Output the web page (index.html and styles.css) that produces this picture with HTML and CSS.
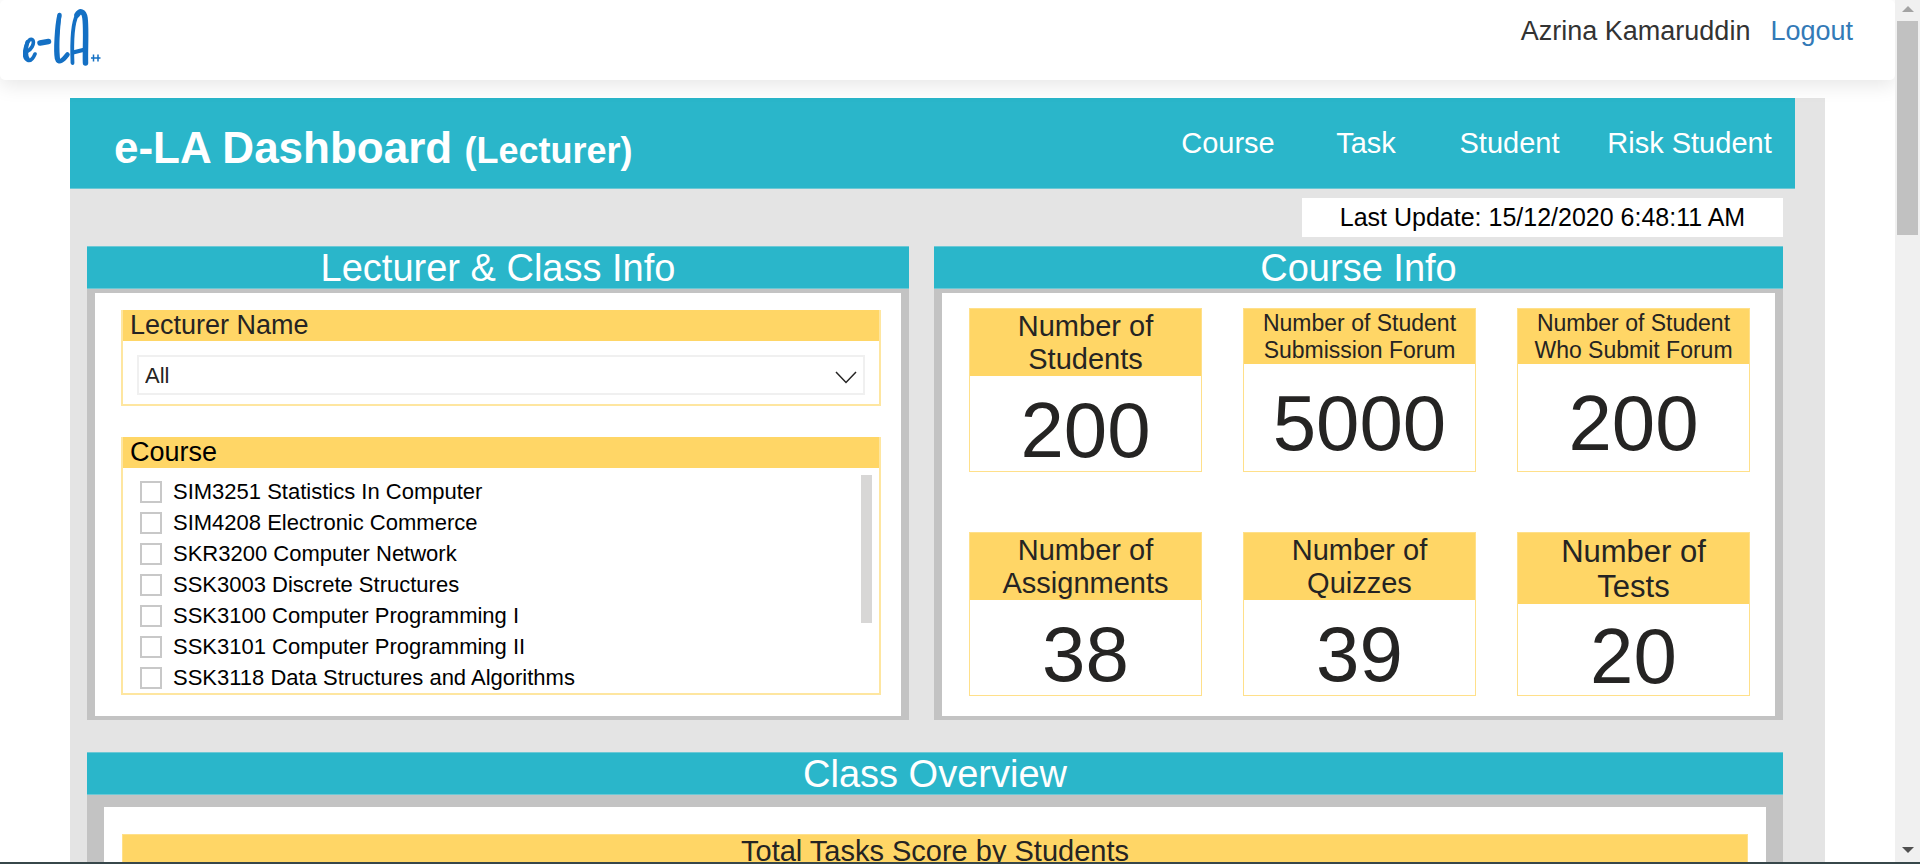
FILE: index.html
```html
<!DOCTYPE html>
<html lang="en">
<head>
<meta charset="utf-8">
<title>e-LA Dashboard</title>
<link rel="stylesheet" href="styles.css">
</head>
<body>
<div class="window">
  <div class="page">
    <header class="topbar">
      <a class="logo" href="#" aria-label="e-LA home">
        <svg width="68" height="60" viewBox="0 0 68 60" fill="none" stroke="#1470c4" stroke-linecap="round" stroke-linejoin="round">
          <path stroke-width="3.6" d="M4 43.500C8 42 11.500 36 10 32.500C8 29 4.500 33 3 38C0.500 46 1.500 51 5.500 52.500C8.500 53 10.500 49.500 12 46"/>
          <path stroke-width="4" d="M4.500 34C2.500 40 2.500 48 5 51.500"/>
          <path stroke-width="5.500" d="M17 35L25.500 33.500"/>
          <path stroke-width="4.500" d="M36.500 7C34 18 32.500 43 34 50.500C35.500 57 41 51 44.500 46.500"/>
          <path stroke-width="3.600" d="M36.500 8C35 22 34 42 35.500 53"/>
          <path stroke-width="3.800" d="M49.500 55C49 42 49 16 54 7"/>
          <path stroke-width="5.500" d="M54 7C57 2 61 3 62 10C63.500 22 62 42 62.500 55"/>
          <path stroke-width="4" d="M50 44.500L62 41.500"/>
        </svg>
        <svg class="plus" width="11" height="10" viewBox="0 0 11 10" stroke="#1470c4" stroke-width="1.500"><path d="M0 5H9.500M2.500 1.500V8.500M7 1.500V8.500"/></svg>
      </a>
      <div class="user"><span>Azrina Kamaruddin</span><a href="#">Logout</a></div>
    </header>

    <main class="report">
      <div class="banner">
        <h1>e-LA Dashboard <small>(Lecturer)</small></h1>
        <nav class="tabs"><a href="#">Course</a><a href="#">Task</a><a href="#">Student</a><a href="#">Risk Student</a></nav>
      </div>

      <div class="content">
        <p class="updated">Last Update: 15/12/2020 6:48:11 AM</p>

        <div class="panels">
          <section class="panel">
            <h2>Lecturer &amp; Class Info</h2>
            <div class="panel-body filters">
              <div class="filter">
                <label class="filter-title soft" for="lecturer">Lecturer Name</label>
                <div class="select-wrap">
                  <select id="lecturer"><option>All</option></select>
                  <svg class="chevron" width="22" height="13" viewBox="0 0 22 13" fill="none" stroke="#252423" stroke-width="1.500"><path d="M1 1L11 11.500L21 1"/></svg>
                </div>
              </div>
              <div class="filter course">
                <h3 class="filter-title">Course</h3>
                <div class="list-wrap">
                  <ul class="list">
                    <li><label><input type="checkbox">SIM3251 Statistics In Computer</label></li>
                    <li><label><input type="checkbox">SIM4208 Electronic Commerce</label></li>
                    <li><label><input type="checkbox">SKR3200 Computer Network</label></li>
                    <li><label><input type="checkbox">SSK3003 Discrete Structures</label></li>
                    <li><label><input type="checkbox">SSK3100 Computer Programming I</label></li>
                    <li><label><input type="checkbox">SSK3101 Computer Programming II</label></li>
                    <li><label><input type="checkbox">SSK3118 Data Structures and Algorithms</label></li>
                  </ul>
                  <div class="list-thumb"></div>
                </div>
              </div>
            </div>
          </section>

          <section class="panel">
            <h2>Course Info</h2>
            <div class="panel-body cards">
              <article class="card"><h3>Number of<br>Students</h3><p>200</p></article>
              <article class="card compact"><h3>Number of Student<br>Submission Forum</h3><p>5000</p></article>
              <article class="card compact"><h3>Number of Student<br>Who Submit Forum</h3><p>200</p></article>
              <article class="card"><h3>Number of<br>Assignments</h3><p>38</p></article>
              <article class="card"><h3>Number of<br>Quizzes</h3><p>39</p></article>
              <article class="card large"><h3>Number of<br>Tests</h3><p>20</p></article>
            </div>
          </section>
        </div>

        <section class="panel overview">
          <h2>Class Overview</h2>
          <div class="panel-body">
            <div class="chart"><h3>Total Tasks Score by Students</h3></div>
          </div>
        </section>
      </div>
    </main>
  </div>
  <div class="scrollbar" aria-hidden="true">
    <svg width="12" height="6" viewBox="0 0 12 6"><path fill="#a3a3a3" d="M6 0L12 6H0Z"/></svg>
    <div class="thumb"></div>
    <svg width="12" height="6" viewBox="0 0 12 6"><path fill="#505050" d="M6 6L12 0H0Z"/></svg>
  </div>
</div>
<div class="edge"></div>
</body>
</html>
```
FILE: styles.css
```css
* { box-sizing: border-box; }
body, h1, h2, h3, p, ul { margin: 0; padding: 0; }
h2, h3 { font-weight: 400; }
a { text-decoration: none; }

body {
  display: flex;
  flex-direction: column;
  height: 100vh;
  overflow: hidden;
  background: #fff;
  color: #252423;
  font-family: "Liberation Sans", Arial, sans-serif;
}

.window { display: flex; flex: 1; min-height: 0; }
.page { flex: 1; min-width: 0; overflow: hidden; }
.edge { height: 2px; background: #37474a; }

.scrollbar {
  display: flex;
  flex-direction: column;
  align-items: center;
  flex: none;
  width: 25px;
  padding: 6px 2px 9px;
  background: #f0f0f0;
}
.scrollbar svg { flex: none; }
.thumb { width: 100%; height: 214px; margin: 9px 0 auto; background: #c1c1c1; }

.topbar {
  position: relative;
  display: flex;
  justify-content: space-between;
  height: 80px;
  padding: 8px 42px 0 23px;
  border-radius: 5px;
  background: #fff;
  box-shadow: 0 5px 20px rgba(0, 0, 0, 0.1);
}
.logo { display: flex; align-items: flex-end; height: 60px; }
.plus { margin-bottom: 5px; }
.user { display: flex; gap: 20px; color: #333; font-size: 27px; line-height: 46px; }
.user a { color: #337ab7; }

.report { margin: 18px 70px 0; padding-right: 30px; background: #e4e4e4; }

.banner {
  display: flex;
  justify-content: space-between;
  height: 91px;
  padding-left: 44px;
  border-bottom: 1px solid #6cc8d5;
  background: #2ab6ca;
  color: #fff;
}
.banner h1 { font-size: 44px; line-height: 100px; white-space: nowrap; }
.banner small { font-size: 36px; }
.tabs { display: grid; grid-template-columns: 138px 138px 149px 211px; text-align: center; }
.tabs a { color: #fff; font-size: 29px; line-height: 90px; }

.content { padding: 9px 12px 0 17px; }
.updated {
  width: 481px;
  margin-left: auto;
  background: #fff;
  color: #000;
  font-size: 25px;
  line-height: 39px;
  text-align: center;
}

.panels { display: grid; grid-template-columns: 822fr 849fr; gap: 25px; margin-top: 9px; }
.panel { display: flex; flex-direction: column; background: #c3c3c3; }
.panel h2 {
  padding-top: 2px;
  border: 1px solid #6cc8d5;
  border-width: 1px 0;
  background: #2ab6ca;
  color: #fff;
  font-size: 38px;
  line-height: 39px;
  text-align: center;
}
.panel-body { flex: 1; margin: 4px 8px; background: #fff; }

.filters { padding: 17px 20px 21px 26px; }
.filter { border: 2px solid #fee6a0; border-top: 0; }
.filter-title {
  display: block;
  padding-left: 7px;
  background: #ffd666;
  color: #000;
  font-size: 27px;
  line-height: 31px;
}
.filter-title.soft { color: #252423; }
.select-wrap { position: relative; padding: 14px 14px 9px; }
.select-wrap select {
  display: block;
  width: 100%;
  height: 40px;
  padding: 0 6px;
  appearance: none;
  border: 2px solid #f0f0f0;
  border-radius: 0;
  background: #fff;
  color: #252423;
  font: 22px "Liberation Sans", Arial, sans-serif;
}
.chevron { position: absolute; top: 30px; right: 22px; pointer-events: none; }
.course { margin-top: 31px; }
.list-wrap { display: flex; justify-content: space-between; padding: 7px 7px 0 17px; }
.list { padding-top: 1px; list-style: none; }
.list label {
  display: flex;
  align-items: center;
  gap: 11px;
  color: #000;
  font-size: 22px;
  line-height: 31px;
}
.list input {
  width: 22px;
  height: 22px;
  margin: 0;
  appearance: none;
  border: 2px solid #c8c8c8;
  background: #fff;
}
.list-thumb { width: 11px; height: 148px; background: #d8d7d6; }

.cards {
  display: grid;
  grid-template-columns: repeat(3, 1fr);
  grid-auto-rows: 1fr;
  gap: 60px 41px;
  padding: 15px 25px 20px 27px;
}
.card {
  display: flex;
  flex-direction: column;
  border: 1px solid #ffe08a;
  text-align: center;
}
.card h3, .chart h3 { background: #ffd666; font-size: 29px; line-height: 33px; }
.card h3 { padding-top: 1px; }
.card p { padding-top: 16px; font-size: 78px; line-height: 76px; }
.card.compact h3 { font-size: 23px; line-height: 27px; }
.card.compact p { padding-top: 21px; }
.card.large h3 { font-size: 31px; line-height: 35px; }
.card.large p { padding-top: 14px; }

.overview { margin-top: 32px; }
.overview .panel-body { margin: 12px 17px; padding: 27px 18px; }
.chart { height: 400px; border: 1px solid #ffe08a; text-align: center; }
```
